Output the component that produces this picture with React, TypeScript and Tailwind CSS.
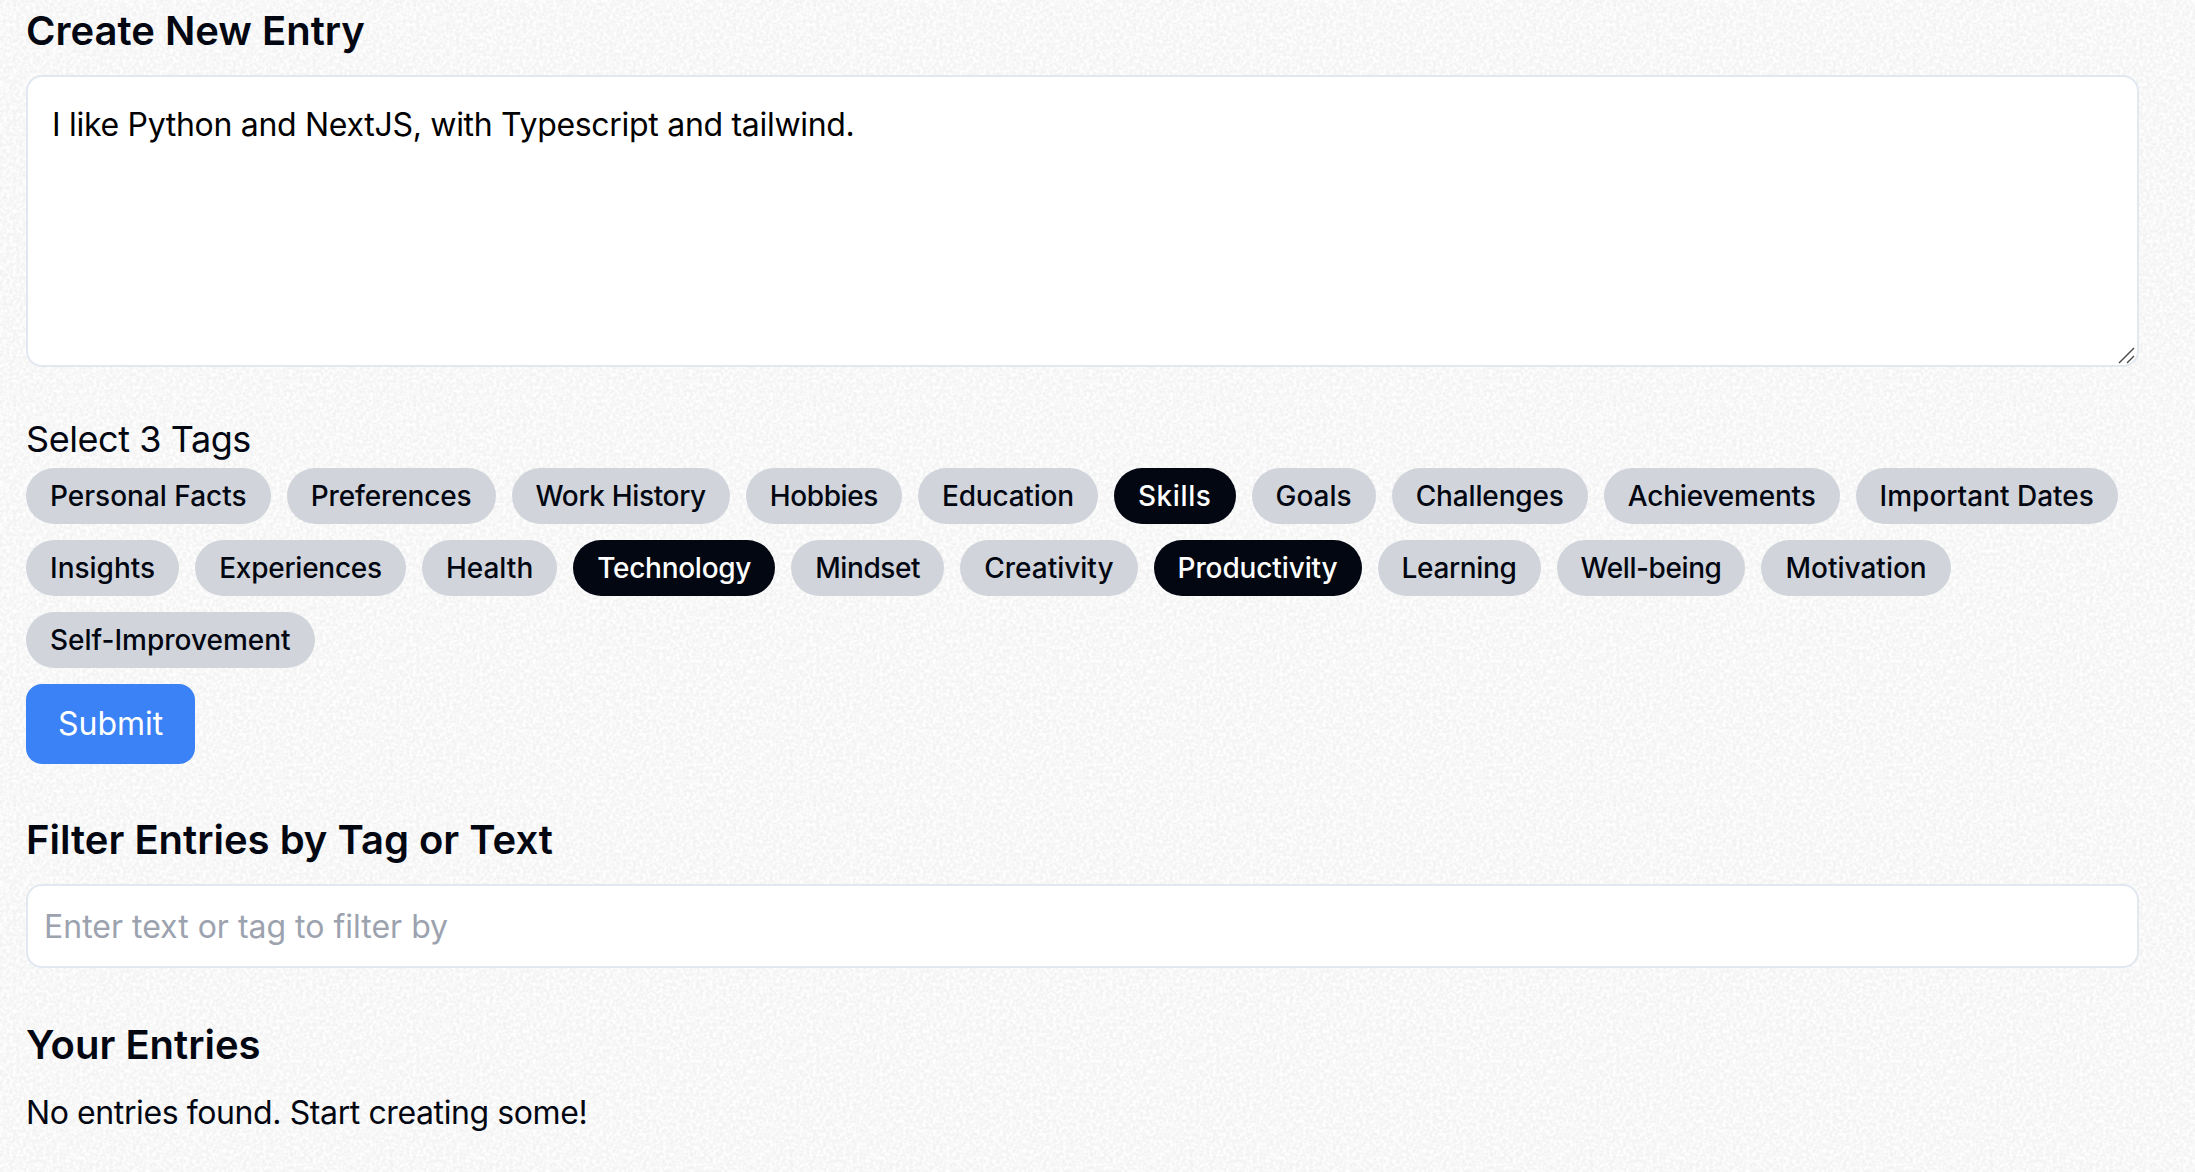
const TAGS = [
  { label: "Personal Facts", active: false, track: "tracking-[0px]" },
  { label: "Preferences", active: false, track: "tracking-[-0.13px]" },
  { label: "Work History", active: false, track: "tracking-[-0.35px]" },
  { label: "Hobbies", active: false, track: "tracking-[-0.4px]" },
  { label: "Education", active: false, track: "tracking-[-0.2px]" },
  { label: "Skills", active: true, track: "tracking-[0.6px]" },
  { label: "Goals", active: false, track: "tracking-[0px]" },
  { label: "Challenges", active: false, track: "tracking-[-0.14px]" },
  { label: "Achievements", active: false, track: "tracking-[-0.2px]" },
  { label: "Important Dates", active: false, track: "tracking-[0px]" },
  { label: "Insights", active: false, track: "tracking-[0px]" },
  { label: "Experiences", active: false, track: "tracking-[-0.25px]" },
  { label: "Health", active: false, track: "tracking-[0px]" },
  { label: "Technology", active: true, track: "tracking-[-0.28px]" },
  { label: "Mindset", active: false, track: "tracking-[-0.4px]" },
  { label: "Creativity", active: false, track: "tracking-[0px]" },
  { label: "Productivity", active: true, track: "tracking-[-0.12px]" },
  { label: "Learning", active: false, track: "tracking-[-0.35px]" },
  { label: "Well-being", active: false, track: "tracking-[-0.42px]" },
  { label: "Motivation", active: false, track: "tracking-[0px]" },
  { label: "Self-Improvement", active: false, track: "tracking-[0px]" },
];

export default function App() {
  return (
    <div className="min-h-[1172px] overflow-hidden bg-[#f3f3f3] bg-[url('data:image/svg+xml,%3Csvg%20xmlns=%22http://www.w3.org/2000/svg%22%20width=%22400%22%20height=%22400%22%3E%3Cfilter%20id=%22n%22%3E%3CfeTurbulence%20type=%22fractalNoise%22%20baseFrequency=%220.3%22%20numOctaves=%223%22%20stitchTiles=%22stitch%22/%3E%3CfeColorMatrix%20values=%220%200%200%200%201%200%200%200%200%201%200%200%200%200%201%200%200%200%202.5%20-0.85%22/%3E%3C/filter%3E%3Crect%20width=%22400%22%20height=%22400%22%20filter=%22url(%23n)%22/%3E%3C/svg%3E')] pl-[26px] font-['Inter',sans-serif] text-[#030712]">
      <div className="w-[2113px]">
        <h2 className="pt-[7px] text-[40px] leading-[48px] font-semibold">Create New Entry</h2>
        <div className="relative mt-[20px]">
          <textarea
            readOnly
            value="I like Python and NextJS, with Typescript and tailwind."
            className="block h-[292px] w-full resize-none rounded-2xl border-2 border-[#e2e8f0] bg-white p-[24px] text-[32px] leading-[48px] tracking-[-0.3px] text-black outline-none"
          />
          <svg className="absolute right-[1px] bottom-[1px] h-[20px] w-[20px]" viewBox="0 0 20 20" fill="none" stroke="#4b4b4b" strokeWidth="1.4">
            <path d="M1 17L16 2" />
            <path d="M9 17L16 10" />
          </svg>
        </div>
        <div className="mt-[48px] text-[36px] leading-[48px] tracking-[-0.43px]">Select 3 Tags</div>
        <div className="mt-[5px] flex flex-wrap gap-4">
          {TAGS.map(({ label, active, track }) => (
            <button
              key={label}
              className={
                (active
                  ? "rounded-full bg-[#030712] px-6 py-2 text-[28px] leading-[40px] font-medium text-white "
                  : "rounded-full bg-[#d1d5db] px-6 py-2 text-[28px] leading-[40px] font-medium text-[#030712] ") + track
              }
            >
              {label}
            </button>
          ))}
        </div>
        <button className="mt-4 block rounded-2xl bg-[#3b82f6] px-8 py-4 text-[32px] leading-[48px] text-white">Submit</button>
        <h2 className="mt-[48px] text-[40px] leading-[56px] font-semibold">Filter Entries by Tag or Text</h2>
        <input
          readOnly
          placeholder="Enter text or tag to filter by"
          className="mt-[16px] block h-[84px] w-full rounded-2xl border-2 border-[#e2e8f0] bg-white px-[16px] text-[32px] leading-[48px] outline-none placeholder:text-[#9ca3af]"
        />
        <h2 className="mt-[49px] text-[40px] leading-[56px] font-semibold">Your Entries</h2>
        <p className="mt-[16px] text-[32px] leading-[48px] tracking-[-0.4px]">No entries found. Start creating some!</p>
      </div>
    </div>
  );
}
